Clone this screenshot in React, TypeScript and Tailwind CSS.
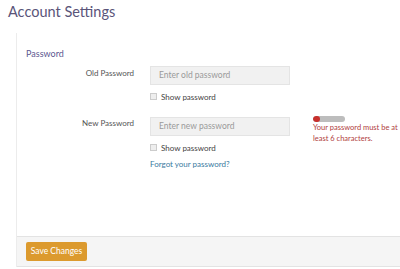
import React from "react";

export default function App() {
  return (
    <div className="w-[400px] h-[269px] bg-white overflow-hidden" style={{ fontFamily: "Lato, 'Open Sans', sans-serif" }}>
      <h1 className="pl-[8px] pt-[3px] h-[33px] text-[14.5px] leading-[18px] text-[#5a5479]">Account Settings</h1>
      <div className="ml-[16px] border-l border-[#ececec] flex flex-col h-[234px]">
        <div className="flex-1 pl-[9px] pt-[14px]">
          <div className="text-[9px] leading-[14px] text-[#5d5890]">Password</div>
          <div className="flex mt-[5px]">
            <div className="w-[108px] shrink-0 text-right text-[8px] text-[#555] leading-[12px] pt-[1px]">Old Password</div>
            <div className="ml-[16px] shrink-0 flex flex-col">
              <div className="w-[140px] h-[19px] bg-[#f1f1f1] border border-[#e4e4e4] text-[8.5px] text-[#9a9a9a] pl-[8px] leading-[17px]">Enter old password</div>
              <div className="flex items-center mt-[6px] h-[11px]">
                <span className="w-[7px] h-[7px] border border-[#ccc] bg-[#eee]" />
                <span className="ml-[4px] text-[8px] text-[#444]">Show password</span>
              </div>
            </div>
          </div>
          <div className="flex mt-[15px]">
            <div className="w-[108px] shrink-0 text-right text-[8px] text-[#555] leading-[12px] pt-[0px]">New Password</div>
            <div className="ml-[16px] shrink-0 flex flex-col">
              <div className="w-[140px] h-[19px] bg-[#f1f1f1] border border-[#e4e4e4] text-[8.5px] text-[#9a9a9a] pl-[8px] leading-[17px]">Enter new password</div>
              <div className="flex items-center mt-[6px] h-[11px]">
                <span className="w-[7px] h-[7px] border border-[#ccc] bg-[#eee]" />
                <span className="ml-[4px] text-[8px] text-[#444]">Show password</span>
              </div>
              <div className="mt-[5px] text-[8px] text-[#3a7aa0] leading-[12px]">Forgot your password?</div>
            </div>
            <div className="ml-[23px] shrink-0 -mt-[1px]">
              <div className="w-[32px] h-[6px] rounded-full bg-[#bdbdbd] overflow-hidden">
                <div className="w-[7px] h-full bg-[#c9302c] rounded-full" />
              </div>
              <div className="mt-[0px] text-[7.5px] leading-[11px] text-[#b0403d] w-[86px]">Your password must be at least 6 characters.</div>
            </div>
          </div>
        </div>
        <div className="h-[31px] bg-[#f5f5f5] border-t border-b border-[#e3e3e3] pl-[9px] flex items-center">
          <button className="h-[19px] w-[61px] rounded-[2px] bg-[#dc9a2e] text-white text-[8.5px]">Save Changes</button>
        </div>
      </div>
    </div>
  );
}
